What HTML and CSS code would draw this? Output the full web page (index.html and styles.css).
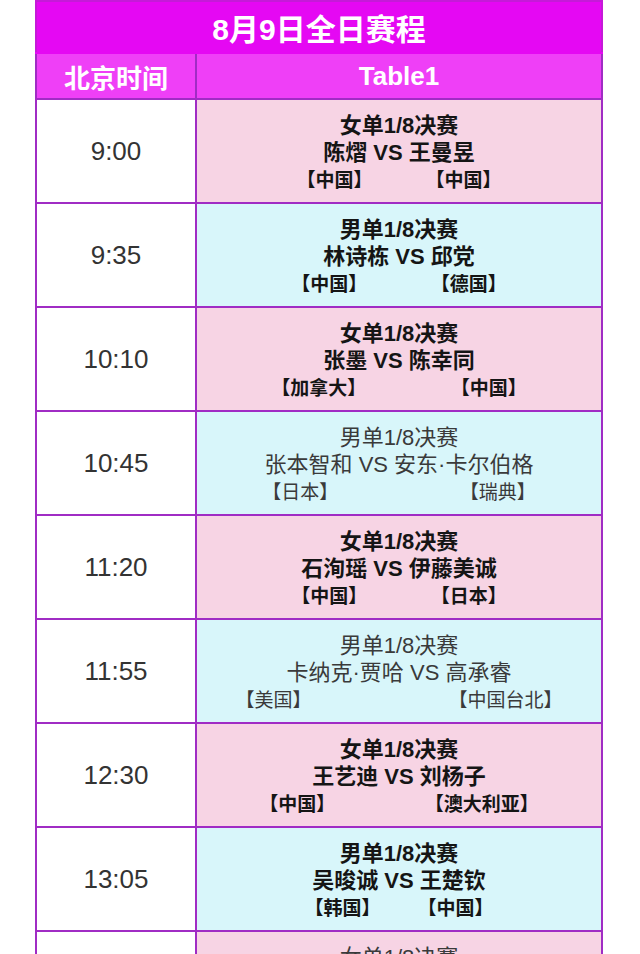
FILE: index.html
```html
<!DOCTYPE html>
<html lang="zh-CN">
<head>
<meta charset="utf-8">
<title>8月9日全日赛程</title>
<link rel="stylesheet" href="styles.css">
</head>
<body>
<table class="schedule">
  <colgroup>
    <col class="col-time">
    <col class="col-table">
  </colgroup>
  <thead>
    <tr class="title-row"><th colspan="2">8月9日全日赛程</th></tr>
    <tr class="head-row"><th>北京时间</th><th>Table1</th></tr>
  </thead>
  <tbody>
    <tr class="match pink strong">
      <td class="time">9:00</td>
      <td class="info"><div class="round">女单1/8决赛</div><div class="players">陈熠 VS 王曼昱</div><div class="nations">【中国】          【中国】</div></td>
    </tr>
    <tr class="match cyan strong">
      <td class="time">9:35</td>
      <td class="info"><div class="round">男单1/8决赛</div><div class="players">林诗栋 VS 邱党</div><div class="nations">【中国】            【德国】</div></td>
    </tr>
    <tr class="match pink strong">
      <td class="time">10:10</td>
      <td class="info"><div class="round">女单1/8决赛</div><div class="players">张墨 VS 陈幸同</div><div class="nations">【加拿大】                【中国】</div></td>
    </tr>
    <tr class="match cyan">
      <td class="time">10:45</td>
      <td class="info"><div class="round">男单1/8决赛</div><div class="players">张本智和 VS 安东·卡尔伯格</div><div class="nations">【日本】                       【瑞典】</div></td>
    </tr>
    <tr class="match pink strong">
      <td class="time">11:20</td>
      <td class="info"><div class="round">女单1/8决赛</div><div class="players">石洵瑶 VS 伊藤美诚</div><div class="nations">【中国】            【日本】</div></td>
    </tr>
    <tr class="match cyan">
      <td class="time">11:55</td>
      <td class="info"><div class="round">男单1/8决赛</div><div class="players">卡纳克·贾哈 VS 高承睿</div><div class="nations">【美国】                          【中国台北】</div></td>
    </tr>
    <tr class="match pink strong">
      <td class="time">12:30</td>
      <td class="info"><div class="round">女单1/8决赛</div><div class="players">王艺迪 VS 刘杨子</div><div class="nations">【中国】                 【澳大利亚】</div></td>
    </tr>
    <tr class="match cyan strong">
      <td class="time">13:05</td>
      <td class="info"><div class="round">男单1/8决赛</div><div class="players">吴晙诚 VS 王楚钦</div><div class="nations">【韩国】       【中国】</div></td>
    </tr>
    <tr class="match pink">
      <td class="time">13:40</td>
      <td class="info"><div class="round">女单1/8决赛</div><div class="players">孙颖莎 VS 平野美宇</div><div class="nations">【中国】          【日本】</div></td>
    </tr>
  </tbody>
</table>
</body>
</html>
```

FILE: styles.css
```css
html, body {
  margin: 0;
  padding: 0;
  background: #ffffff;
}

body {
  font-family: "Liberation Sans", "Noto Sans CJK SC", sans-serif;
  color: #1d1d1d;
}

.schedule {
  margin: 0 0 0 35px;
  width: 568px;
  border-collapse: collapse;
  table-layout: fixed;
}

.col-time {
  width: 160px;
}

.schedule th,
.schedule td {
  border: 2px solid #a02cc4;
  padding: 0;
  text-align: center;
  vertical-align: middle;
}

.title-row th {
  height: 50px;
  background: #e508f3;
  color: #ffffff;
  font-size: 30px;
  font-weight: 700;
  border-color: #c51ad8;
  border-bottom-color: #e508f3;
}

.head-row th {
  height: 44px;
  background: #ef3ff7;
  color: #ffffff;
  font-size: 26px;
  font-weight: 700;
}

.match .time {
  height: 102px;
  background: #ffffff;
  color: #333333;
  font-size: 26px;
}

.match .info {
  height: 98px;
  padding-top: 4px;
  color: #222222;
}

.pink .info {
  background: #f7d4e4;
}

.cyan .info {
  background: #d8f6fa;
}

.round,
.players {
  font-size: 22px;
  line-height: 27px;
}

.nations {
  font-size: 19px;
  line-height: 29px;
  white-space: pre;
}

.strong .info {
  font-weight: 700;
  color: #151515;
}

.match:not(.strong) .info {
  color: #3a3a3a;
}
```
